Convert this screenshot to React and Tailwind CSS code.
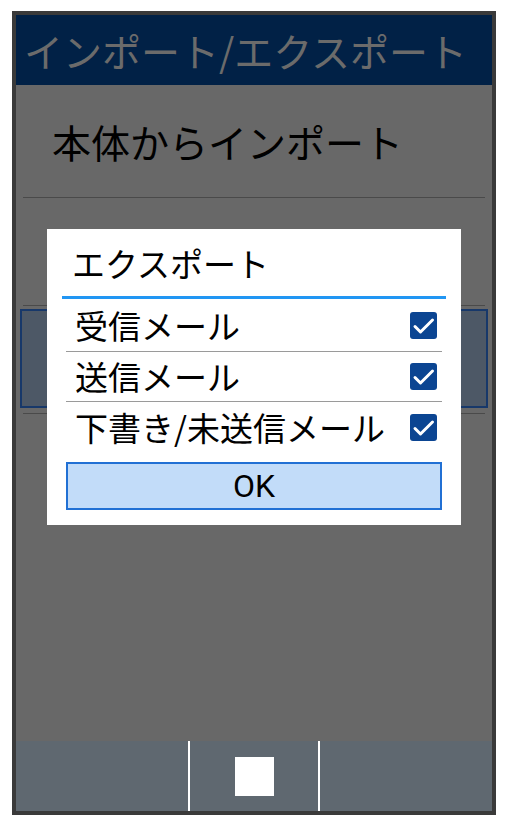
import React from "react";

const jp = { fontFamily: '"Noto Sans CJK JP", "Noto Sans", sans-serif' };

function Check() {
    return (
        <div className="w-[27px] h-[27px] rounded-[3px] bg-[#0b4592]">
            <svg width="27" height="27" viewBox="0 0 27 27" fill="none">
                <path d="M5 14.5l5.5 5.5L22.5 8" stroke="#fff" strokeWidth="3" strokeLinecap="round" strokeLinejoin="round" />
            </svg>
        </div>
    );
}

function Row({ label, h, last }) {
    return (
        <div className={"flex items-center justify-between pl-[9px] pr-[5px] " + h + (last ? "" : " border-b border-[#9a9a9a]")}>
            <span className="text-[33px] leading-none text-black whitespace-nowrap">{label}</span>
            <Check />
        </div>
    );
}

export default function App() {
    return (
        <div className="w-[507px] h-[826px] bg-white pt-[11px] pl-[12px]" style={jp}>
            <div className="w-[484px] h-[804px] border-4 border-[#3a3a3a] flex flex-col">
                {/* header */}
                <div className="h-[70px] bg-[#012146] flex items-center pl-[8px]">
                    <span className="text-[39px] leading-none text-[#6b6b6b] whitespace-nowrap">インポート/エクスポート</span>
                </div>

                {/* list, dimmed */}
                <div className="relative flex-1 bg-[#686868]">
                    <div className="px-[7px]">
                        <div className="h-[113px] flex items-center pl-[29px] border-b border-[#4a4a4a]">
                            <span className="text-[39px] leading-none text-black">本体からインポート</span>
                        </div>
                        <div className="h-[108px] border-b border-[#4a4a4a]"></div>
                    </div>
                    <div className="mx-[4px] mt-[3px] h-[99px] bg-[#4d5866] border-2 border-[#17386a]"></div>
                    <div className="mx-[7px] mt-[5px] border-b border-[#4a4a4a]"></div>

                    {/* dialog */}
                    <div className="absolute left-[31px] top-[144px] w-[414px] h-[296px] bg-white px-[15px]">
                        <div className="h-[70px] flex items-center pl-[10px] pt-[1px] border-b-[3px] border-[#2196f3]">
                            <span className="text-[33px] leading-none text-black">エクスポート</span>
                        </div>
                        <div className="px-[4px]">
                            <Row label="受信メール" h="h-[53px]" />
                            <Row label="送信メール" h="h-[50px]" />
                            <Row label="下書き/未送信メール" h="h-[50px]" last />
                            <div className="mt-[10px] h-[48px] bg-[#c2dcf9] border-2 border-[#2170d4] flex items-center justify-center">
                                <span className="text-[32px] leading-none text-black" style={{ fontFamily: 'Roboto, "Noto Sans", sans-serif' }}>OK</span>
                            </div>
                        </div>
                    </div>
                </div>

                {/* bottom keys */}
                <div className="h-[70px] bg-[#5f6870] flex">
                    <div className="w-[172px]"></div>
                    <div className="w-[2px] bg-white"></div>
                    <div className="w-[128px] flex items-center justify-center">
                        <div className="w-[39px] h-[39px] bg-white"></div>
                    </div>
                    <div className="w-[2px] bg-white"></div>
                    <div className="flex-1"></div>
                </div>
            </div>
        </div>
    );
}
